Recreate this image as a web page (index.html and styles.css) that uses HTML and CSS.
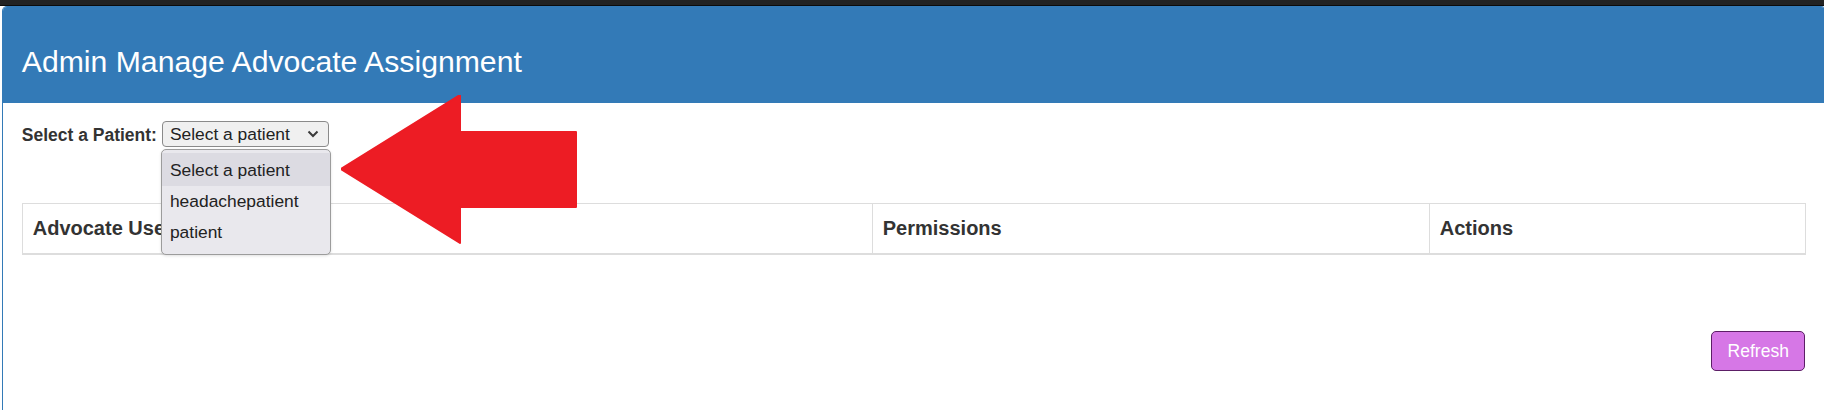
FILE: index.html
```html
<!DOCTYPE html>
<html lang="en">
<head>
<meta charset="utf-8">
<title>Admin Manage Advocate Assignment</title>
<link rel="stylesheet" href="styles.css">
</head>
<body>
<div class="topbar"></div>
<div class="panel">
  <div class="panel-heading">
    <h3 class="panel-title">Admin Manage Advocate Assignment</h3>
  </div>
  <div class="panel-body">
    <div class="form-row">
      <label class="field-label">Select a Patient:</label>
      <div class="select-wrap">
        <div class="select-box">
          <span class="select-text">Select a patient</span>
          <svg class="chevron" width="12" height="8" viewBox="0 0 12 8"><path d="M1.5 1.5 L6 6 L10.5 1.5" fill="none" stroke="#3a3a3a" stroke-width="2"/></svg>
        </div>
        <div class="dropdown">
          <div class="option first active">Select a patient</div>
          <div class="option">headachepatient</div>
          <div class="option">patient</div>
        </div>
      </div>
    </div>
    <table class="data-table">
      <colgroup>
        <col class="col-user">
        <col class="col-perm">
        <col class="col-actions">
      </colgroup>
      <thead>
        <tr>
          <th>Advocate User</th>
          <th>Permissions</th>
          <th>Actions</th>
        </tr>
      </thead>
    </table>
    <div class="button-row">
      <button class="refresh-btn">Refresh</button>
    </div>
  </div>
</div>
<svg class="annotation-arrow" width="240" height="152" viewBox="0 0 240 152">
  <polygon points="0,74 119,0 119,37 235,37 235,112 119,112 119,148" fill="#ed1c24" stroke="#ed1c24" stroke-width="2" stroke-linejoin="round"/>
</svg>
</body>
</html>
```
FILE: styles.css
```css
html, body {
  margin: 0;
  padding: 0;
  background: #ffffff;
  font-family: "Liberation Sans", Arial, sans-serif;
  color: #333333;
  overflow: hidden;
}

.topbar {
  height: 5px;
  background: #222222;
  border-bottom: 1px solid #0b0b0b;
}

.panel {
  margin-left: 2px;
  margin-right: -2px;
  border: 1px solid #337ab7;
  border-bottom: none;
  border-radius: 5px 5px 0 0;
  height: 420px;
}

.panel-heading {
  background: #337ab7;
  padding: 12.5px 18.75px;
  border-radius: 4px 4px 0 0;
}

.panel-title {
  margin: 25px 0 12.5px 0;
  font-size: 30.2px;
  line-height: 33px;
  font-weight: normal;
  color: #ffffff;
}

.panel-body {
  padding: 18.75px;
}

.form-row {
  display: flex;
  align-items: center;
  height: 26px;
}

.field-label {
  font-size: 17.5px;
  font-weight: bold;
  color: #333333;
  margin-right: 5px;
  position: relative;
  top: 1px;
}

.select-wrap {
  position: relative;
}

.select-box {
  box-sizing: border-box;
  width: 167px;
  height: 26px;
  border: 1px solid #8a8a8a;
  border-radius: 4px;
  background: #f0f0f0;
  display: flex;
  align-items: center;
  justify-content: space-between;
  padding: 0 9px 0 7px;
}

.select-text {
  font-size: 17.4px;
  color: #222222;
}

.chevron {
  display: block;
}

.dropdown {
  position: absolute;
  left: -1px;
  top: 28px;
  width: 170px;
  box-sizing: border-box;
  background: #e9e8ed;
  border: 1px solid #9c9c9c;
  border-radius: 5px;
  padding: 3px 0 6px 0;
  box-shadow: 0 1px 3px rgba(0,0,0,0.12);
  z-index: 5;
}

.option {
  height: 31px;
  line-height: 31px;
  padding-left: 8px;
  font-size: 17.4px;
  color: #222222;
  white-space: nowrap;
}

.option.first {
  height: 33px;
  box-sizing: border-box;
  padding-top: 2px;
}

.option.active {
  background: #dcdbe2;
}

.data-table {
  margin-top: 56px;
  width: 100%;
  border-collapse: collapse;
  border: 1px solid #dddddd;
}

.col-user { width: 850px; }
.col-perm { width: 557px; }

.data-table th {
  text-align: left;
  font-size: 20px;
  font-weight: bold;
  line-height: 28.5px;
  padding: 10px;
  color: #333333;
  border-left: 1px solid #dddddd;
  border-bottom: 2.5px solid #dddddd;
}

.button-row {
  display: flex;
  justify-content: flex-end;
  margin-top: 76px;
}

.refresh-btn {
  box-sizing: border-box;
  height: 40.6px;
  width: 94px;
  background: #d677e6;
  border: 1px solid #5c1f66;
  border-radius: 5px;
  color: #ffffff;
  font-family: "Liberation Sans", Arial, sans-serif;
  font-size: 17.5px;
  padding: 0;
  margin-right: 1px;
}

.annotation-arrow {
  position: absolute;
  left: 341px;
  top: 95px;
  pointer-events: none;
}
```
